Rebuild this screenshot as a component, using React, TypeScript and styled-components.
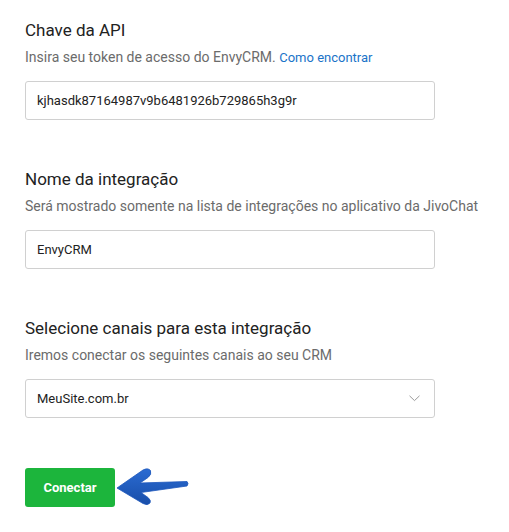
import React from "react";
import styled, { createGlobalStyle } from "styled-components";

const Global = createGlobalStyle`
  html, body { margin: 0; padding: 0; background: #fff; }
  body { font-family: Roboto, "Liberation Sans", Arial, sans-serif; }
`;

const Page = styled.div`
  padding: 20px 25px 0 25px;
  display: flex;
  flex-direction: column;
  gap: 49px;
`;

const Section = styled.section`
  display: flex;
  flex-direction: column;
`;

const Title = styled.div`
  font-size: 17px;
  line-height: 20px;
  color: #222;
`;

const Hint = styled.div`
  margin-top: 7px;
  height: 20px;
  font-size: 14px;
  line-height: 20px;
  color: #6b6b6b;
`;

const Link = styled.a`
  color: #1a73c8;
  font-size: 13px;
  line-height: 1;
  text-decoration: none;
`;

const Field = styled.div`
  margin-top: 14px;
  box-sizing: border-box;
  width: 410px;
  height: 39px;
  border: 1px solid #d0d0d0;
  border-radius: 3px;
  display: flex;
  align-items: center;
  justify-content: space-between;
  padding: 0 14px 0 11px;
  font-size: 13px;
  color: #222;
`;

const Actions = styled.div`
  display: flex;
  align-items: center;
`;

const Button = styled.button`
  width: 90px;
  height: 39px;
  border: none;
  border-radius: 3px;
  background: #1cb53c;
  color: #fff;
  font-family: Roboto, "Liberation Sans", Arial, sans-serif;
  font-weight: 700;
  font-size: 13px;
  padding: 0;
`;

const Chevron = () => (
  <svg width="11" height="7" viewBox="0 0 11 7">
    <path d="M0.5 0.8 L5.5 5.6 L10.5 0.8" fill="none" stroke="#9a9a9a" strokeWidth="1" />
  </svg>
);

const Arrow = () => (
  <svg width="75" height="40" viewBox="115 467 75 40" style={{ display: "block" }}>
    <defs>
      <linearGradient id="ag" x1="0" y1="0" x2="0" y2="1">
        <stop offset="0" stopColor="#2b6bd2" />
        <stop offset="1" stopColor="#184ea9" />
      </linearGradient>
    </defs>
    <path
      d="M117 488 L143 470 Q148 467.5 150.5 470.5 Q152 474.5 148 477.5 L140 483 L187 481.5 Q189 483.5 187 486 L141 492.5 L148 497.5 Q151.5 500.5 150 503 Q147.5 506 143 503.5 Z"
      fill="url(#ag)"
      stroke="#1d57bb"
      strokeWidth="0.8"
      strokeLinejoin="round"
    />
  </svg>
);

export default function App() {
  return (
    <>
      <Global />
      <Page>
        <Section>
          <Title>Chave da API</Title>
          <Hint>
            Insira seu token de acesso do EnvyCRM. <Link href="#">Como encontrar</Link>
          </Hint>
          <Field>kjhasdk87164987v9b6481926b729865h3g9r</Field>
        </Section>
        <Section>
          <Title>Nome da integração</Title>
          <Hint>Será mostrado somente na lista de integrações no aplicativo da JivoChat</Hint>
          <Field>EnvyCRM</Field>
        </Section>
        <Section>
          <Title>Selecione canais para esta integração</Title>
          <Hint>Iremos conectar os seguintes canais ao seu CRM</Hint>
          <Field>
            <span>MeuSite.com.br</span>
            <Chevron />
          </Field>
        </Section>
        <Actions>
          <Button>Conectar</Button>
          <Arrow />
        </Actions>
      </Page>
    </>
  );
}
